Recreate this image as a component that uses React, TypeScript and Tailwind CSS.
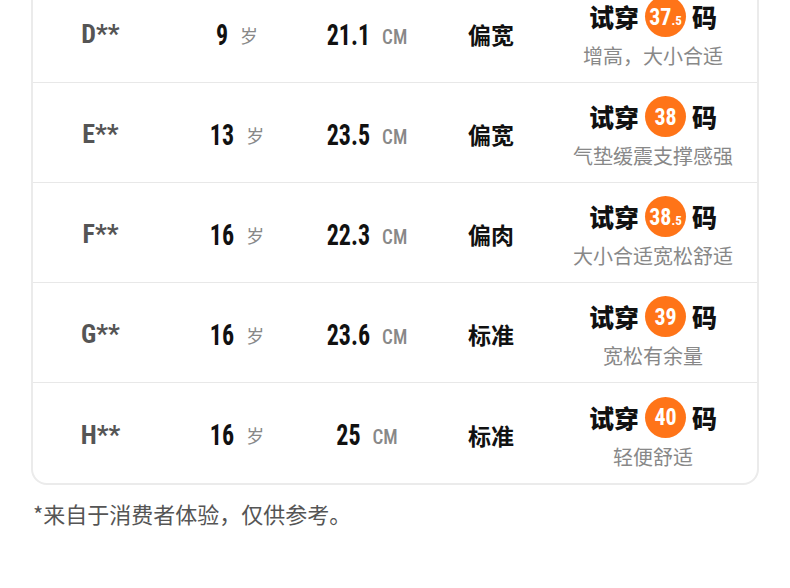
import React from 'react';

type Row = {
  name: string;
  age: string;
  foot: string;
  width: string;
  size: string;
  half?: boolean;
  note: string;
};

const rows: Row[] = [
  { name: 'D**', age: '9', foot: '21.1', width: '偏宽', size: '37', half: true, note: '增高，大小合适' },
  { name: 'E**', age: '13', foot: '23.5', width: '偏宽', size: '38', note: '气垫缓震支撑感强' },
  { name: 'F**', age: '16', foot: '22.3', width: '偏肉', size: '38', half: true, note: '大小合适宽松舒适' },
  { name: 'G**', age: '16', foot: '23.6', width: '标准', size: '39', note: '宽松有余量' },
  { name: 'H**', age: '16', foot: '25', width: '标准', size: '40', note: '轻便舒适' },
];

// condensed digits: Roboto with the width axis pulled in, stretched taller
const narrow = "font-['Roboto',sans-serif] [font-stretch:75%]";
const cjk = "font-['Noto_Sans_CJK_SC',sans-serif]";

function SizeBadge({ size, half }: { size: string; half?: boolean }) {
  return (
    <span className={`w-[41px] h-[41px] rounded-full bg-[#ff7418] text-white flex items-center justify-center ${narrow} font-bold`}>
      <span className="inline-block text-[22px] leading-none scale-y-110">{size}</span>
      {half && <span className="text-[13px] leading-none mt-[8px]">.5</span>}
    </span>
  );
}

export default function App() {
  return (
    <div className={`w-[790px] h-[588px] bg-white overflow-hidden ${cjk}`}>
      <div className="mx-[31px] -mt-[19px] border-2 border-[#ebebeb] rounded-[16px]">
        {rows.map((r, i) => (
          <div
            key={r.name}
            className={`flex items-center h-[100px] ${i < rows.length - 1 ? 'border-b border-[#e8e8e8]' : ''}`}
          >
            <div className={`w-[135px] pt-[4px] text-center text-[26px] font-bold text-[#555] ${narrow}`}>{r.name}</div>
            <div className="w-[138px] pt-[4px] flex items-baseline justify-center gap-[12px]">
              <span className={`inline-block text-[24px] font-bold text-[#111] scale-y-120 ${narrow}`}>{r.age}</span>
              <span className="text-[18px] text-[#888]">岁</span>
            </div>
            <div className="w-[122px] pt-[4px] flex items-baseline justify-center gap-[12px]">
              <span className={`inline-block text-[24px] font-bold text-[#111] scale-y-120 ${narrow}`}>{r.foot}</span>
              <span className={`inline-block text-[19px] font-medium text-[#888] scale-y-110 ${narrow}`}>CM</span>
            </div>
            <div className="w-[126px] pt-[4px] text-center text-[23px] font-bold text-[#111]">{r.width}</div>
            <div className="w-[198px] flex flex-col items-center">
              <div className="flex items-center gap-[6px] text-[25px] font-black text-[#111] leading-none">
                <span>试穿</span>
                <SizeBadge size={r.size} half={r.half} />
                <span>码</span>
              </div>
              <div className="mt-[6px] text-[20px] text-[#888] leading-[26px]">{r.note}</div>
            </div>
          </div>
        ))}
      </div>
      <p className="mt-[12px] ml-[33px] text-[22px] text-[#555]">*来自于消费者体验，仅供参考。</p>
    </div>
  );
}
